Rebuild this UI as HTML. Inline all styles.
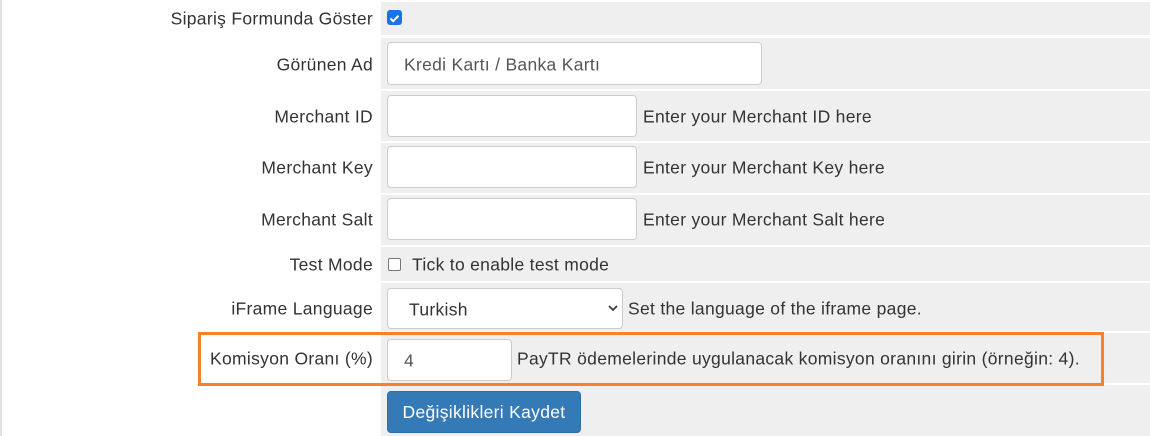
<!DOCTYPE html>
<html><head><style>
body{margin:0;width:1150px;height:436px;background:#fff;position:relative;overflow:hidden;font-family:"Liberation Sans",sans-serif;font-size:17.5px;letter-spacing:.3px;color:#333}
.lb{position:absolute;left:0;width:2px;top:0;height:436px;background:#e3e3e3}
.row{position:absolute;left:381px;right:0;background:#efefef}
.l{position:absolute;right:777px;white-space:nowrap;transform:translateY(-50%);margin-top:1px}
.t{position:absolute;white-space:nowrap;transform:translateY(-50%);margin-top:1px}
.in{position:absolute;background:#fff;border:1px solid #ccc;border-radius:4px;box-sizing:border-box;color:#555}
.in span{position:absolute;left:16px;top:50%;transform:translateY(-50%);margin-top:1px;white-space:nowrap}
</style></head><body>
<div class="lb"></div>
<div class="row" style="top:2px;height:33px"></div>
<div class="row" style="top:38px;height:51px"></div>
<div class="row" style="top:91px;height:50px"></div>
<div class="row" style="top:143px;height:50px"></div>
<div class="row" style="top:195px;height:50px"></div>
<div class="row" style="top:247px;height:34px"></div>
<div class="row" style="top:283px;height:48px"></div>
<div class="row" style="top:333px;height:50px"></div>
<div class="row" style="top:385px;height:51px"></div>

<div class="l" style="top:18px">Sipariş Formunda Göster</div>
<div style="position:absolute;left:387px;top:10px;width:15px;height:15px;background:#1a73e8;border-radius:3px"><svg width="15" height="15" viewBox="0 0 15 15"><path d="M3.5 7.5l2.7 2.7 5.3-5.5" stroke="#fff" stroke-width="2" fill="none"/></svg></div>

<div class="l" style="top:64px">Görünen Ad</div>
<div class="in" style="left:387px;top:42px;width:375px;height:43px"><span>Kredi Kartı / Banka Kartı</span></div>

<div class="l" style="top:116px">Merchant ID</div>
<div class="in" style="left:387px;top:95px;width:250px;height:42px"></div>
<div class="t" style="left:643px;top:116px">Enter your Merchant ID here</div>

<div class="l" style="top:167px">Merchant Key</div>
<div class="in" style="left:387px;top:146px;width:250px;height:42px"></div>
<div class="t" style="left:643px;top:167px">Enter your Merchant Key here</div>

<div class="l" style="top:219px">Merchant Salt</div>
<div class="in" style="left:387px;top:198px;width:250px;height:42px"></div>
<div class="t" style="left:643px;top:219px">Enter your Merchant Salt here</div>

<div class="l" style="top:264px">Test Mode</div>
<div style="position:absolute;left:388px;top:258px;width:11px;height:11px;border:1px solid #767676;border-radius:2px;background:#fff"></div>
<div class="t" style="left:412px;top:264px">Tick to enable test mode</div>

<div class="l" style="top:308px">iFrame Language</div>
<div class="in" style="left:387px;top:288px;width:236px;height:41px;color:#333"><span style="left:21px">Turkish</span>
<svg style="position:absolute;right:4px;top:15px" width="10" height="8" viewBox="0 0 10 8"><path d="M1 2l4 4 4-4" stroke="#333" stroke-width="1.6" fill="none"/></svg></div>
<div class="t" style="left:628px;top:308px">Set the language of the iframe page.</div>

<div style="position:absolute;left:198px;top:332px;width:906px;height:54px;border:3px solid #f5822a;box-sizing:border-box"></div>
<div class="l" style="top:358px">Komisyon Oranı (%)</div>
<div class="in" style="left:387px;top:339px;width:125px;height:42px"><span>4</span></div>
<div class="t" style="left:517px;top:358px">PayTR ödemelerinde uygulanacak komisyon oranını girin (örneğin: 4).</div>

<div style="position:absolute;left:387px;top:391px;width:194px;height:42px;background:#337ab7;border:1px solid #2e6da4;border-radius:4px;box-sizing:border-box;color:#fff;text-align:center;line-height:41px">Değişiklikleri Kaydet</div>
</body></html>
